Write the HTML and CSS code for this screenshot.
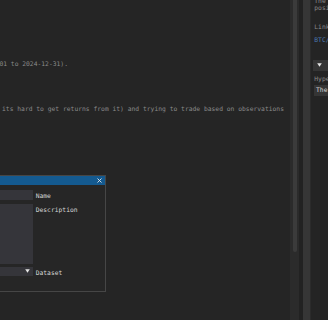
FILE: index.html
```html
<!DOCTYPE html>
<html>
<head>
<meta charset="utf-8">
<link rel="stylesheet" href="styles.css">
</head>
<body>
<div class="app">
  <div class="main">
    <div class="line line-1">Backtest period: daily candles (2024-01-01 to 2024-12-31).</div>
    <div class="line line-2">Avoid just buying and holding BTC (since its hard to get returns from it) and trying to trade based on observations</div>

    <div class="modal">
      <div class="modal-title">
        <span class="modal-title-text">Create Strategy</span>
        <svg class="close" width="5" height="5" viewBox="0 0 5 5"><path d="M0.5 0.5 L4.5 4.5 M4.5 0.5 L0.5 4.5" stroke="#e6e6e6" stroke-width="0.9" fill="none"/></svg>
      </div>
      <div class="modal-body">
        <div class="frame frame-single"></div>
        <div class="label">Name</div>
        <div class="frame frame-multi"></div>
        <div class="label">Description</div>
        <div class="frame frame-combo">
          <svg class="combo-arrow" width="5" height="4" viewBox="0 0 5 4"><path d="M0.2 0.3 L4.8 0.3 L2.5 3.8 Z" fill="#e6e6e6"/></svg>
        </div>
        <div class="label">Dataset</div>
      </div>
    </div>
  </div>

  <div class="scroll-track"><div class="scroll-grab"></div></div>
  <div class="gap"></div>
  <div class="splitter"><div class="splitter-edge"></div></div>

  <div class="side">
    <div class="side-text side-para">The strategy opens a long<br>position when momentum turns up.</div>
    <div class="side-text side-link-label">Linked dataset:</div>
    <div class="side-text side-link">BTC/USDT daily</div>
    <div class="header">
      <svg class="header-arrow" width="5" height="4" viewBox="0 0 5 4"><path d="M0.2 0.3 L4.8 0.3 L2.5 3.8 Z" fill="#e6e6e6"/></svg>
      <span class="header-text">Parameters</span>
    </div>
    <div class="side-text side-hyper">Hyperparameters</div>
    <div class="input">The lookback window</div>
  </div>
</div>
</body>
</html>
```

FILE: styles.css
```css
html, body {
  margin: 0;
  padding: 0;
  background: #252525;
  overflow: hidden;
  width: 328px;
  height: 320px;
}

.app {
  display: flex;
  width: 328px;
  height: 320px;
  font-family: "DejaVu Sans Mono", "Liberation Mono", monospace;
  font-size: 6.33px;
  white-space: nowrap;
}

.main {
  position: relative;
  flex: 0 0 290px;
  height: 320px;
  overflow: hidden;
  padding-top: 60.3px;
  box-sizing: border-box;
  color: #8a8a8a;
}

.line {
  line-height: 8px;
  height: 8px;
}

.line-1 {
  margin-left: -153px;
}

.line-2 {
  margin-left: -154.2px;
  margin-top: 37px;
}

/* modal window */
.modal {
  position: absolute;
  left: -100px;
  top: 175px;
  width: 206px;
  height: 117px;
  box-sizing: border-box;
  border: 1px solid #464646;
  background: #262626;
  display: flex;
  flex-direction: column;
}

.modal-title {
  height: 9px;
  background: #145a90;
  display: flex;
  align-items: center;
  justify-content: space-between;
  padding: 0 3.3px 0 4px;
  color: #e6e6e6;
}

.modal-title-text {
  line-height: 9px;
}

.close {
  display: block;
}

.modal-body {
  display: grid;
  grid-template-columns: 128px 1fr;
  column-gap: 2.7px;
  row-gap: 3px;
  padding: 5px 4px 0 4px;
  align-items: start;
}

.frame {
  background: #35353a;
}

.frame-single {
  height: 9.5px;
}

.frame-multi {
  height: 60px;
}

.frame-combo {
  height: 9px;
  display: flex;
  justify-content: flex-end;
  align-items: center;
  padding-right: 3px;
}

.combo-arrow {
  display: block;
}

.label {
  color: #d6d6d6;
  line-height: 9.5px;
  padding-top: 1px;
}

/* scrollbar and splitter */
.scroll-track {
  flex: 0 0 9px;
  background: #2b2b2b;
  padding-left: 2.5px;
  box-sizing: border-box;
}

.scroll-grab {
  width: 4.5px;
  height: 252px;
  background: #3b3b3b;
  border-radius: 0 0 2px 2px;
}

.gap {
  flex: 0 0 4px;
  background: #222222;
}

.splitter {
  flex: 0 0 9px;
  background: #2b2b2b;
  display: flex;
}

.splitter-edge {
  width: 7px;
  background: #363636;
}

/* right side panel */
.side {
  flex: 0 0 200px;
  background: #242424;
  padding-left: 3px;
  box-sizing: border-box;
  color: #8a8a8a;
  margin-left: -0.7px;
}

.side-text {
  line-height: 7.3px;
}

.side-para {
  margin-top: -3.1px;
}

.side-link-label {
  margin-top: 11.7px;
}

.side-link {
  margin-top: 5.2px;
  color: #4a78b0;
}

.header {
  margin-top: 17px;
  margin-left: -1.7px;
  height: 10.7px;
  background: #353535;
  display: flex;
  align-items: center;
  padding-left: 4.7px;
  gap: 8px;
  color: #e0e0e0;
}

.header-arrow {
  display: block;
}

.side-hyper {
  margin-top: 4.5px;
}

.input {
  margin-top: 2.5px;
  margin-left: -0.7px;
  height: 10.7px;
  line-height: 10.7px;
  background: #353535;
  padding-left: 2.4px;
  color: #d6d6d6;
}
```
